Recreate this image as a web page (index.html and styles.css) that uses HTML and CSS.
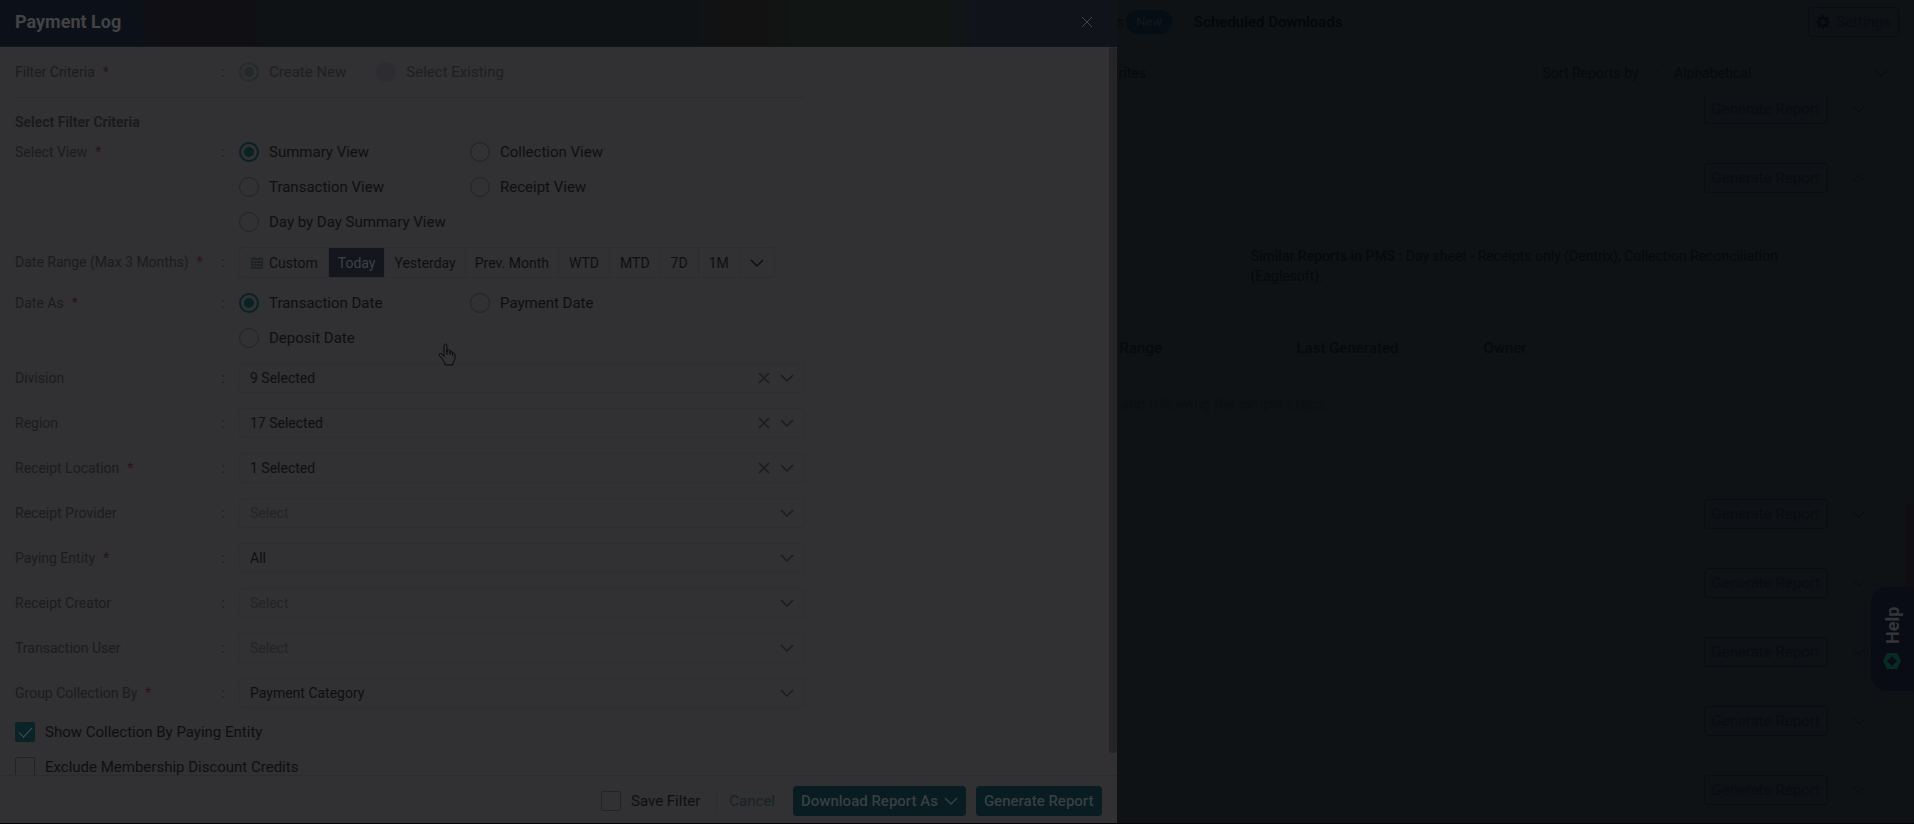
FILE: index.html
```html
<!DOCTYPE html>
<html lang="en">
<head>
  <meta charset="UTF-8" />
  <meta name="viewport" content="width=device-width, initial-scale=1.0" />
  <title>Payment Log</title>
  <link rel="stylesheet" href="styles.css">
</head>
<body>
  <svg class="sprite" aria-hidden="true">
    <symbol id="chevron" viewBox="0 0 14 14"><path d="M1 4l6 6 6-6" /></symbol>
    <symbol id="chevron-up" viewBox="0 0 14 14"><path d="M1 10l6-6 6 6" /></symbol>
    <symbol id="cross" viewBox="0 0 14 14"><path d="M2 2l10 10M12 2L2 12" /></symbol>
  </svg>

  <!-- Reports page behind the drawer -->
  <main class="reports">
    <nav class="tabs">
      <span>s</span>
      <span class="pill">New</span>
      <a class="tab" href="#scheduled">Scheduled Downloads</a>
      <button class="settings" type="button">
        <svg class="gear" viewBox="0 0 14 14"><path fill-rule="evenodd" d="M6 0h2l.4 1.8 1.4.6L11.500 1.400 12.800 2.800l-1 1.500.6 1.400L14 6v2l-1.700.4-.6 1.400 1 1.500-1.400 1.400-1.500-1-1.400.6L8 14H6l-.4-1.700-1.400-.6-1.500 1L1.300 11.300l1-1.500-.6-1.400L0 8V6l1.700-.4.6-1.400-1-1.500L2.700 1.300l1.500 1 1.400-.6zM7 4.500a2.500 2.500 0 100 5 2.500 2.500 0 000-5z" /></svg>
        Settings
      </button>
    </nav>

    <div class="toolbar">
      <span>rites</span>
      <label class="sort-label" for="sort">Sort Reports by</label>
      <span class="sort-colon">:</span>
      <div class="sort">
        <select id="sort"><option>Alphabetical</option></select>
        <svg class="icon"><use href="#chevron" /></svg>
      </div>
    </div>

    <section class="report first"><button class="ghost" type="button">Generate Report</button><svg class="icon"><use href="#chevron" /></svg></section>
    <section class="report"><button class="ghost" type="button">Generate Report</button><svg class="icon"><use href="#chevron-up" /></svg></section>

    <div class="details">
      <p class="similar"><b>Similar Reports in PMS :</b> Day sheet - Receipts only (Dentrix), Collection Reconciliation (Eaglesoft).</p>
      <div class="columns"><b>Range</b><b>Last Generated</b><b>Owner</b></div>
      <p class="hint">and following the simple steps.</p>
    </div>

    <section class="report"><button class="ghost" type="button">Generate Report</button><svg class="icon"><use href="#chevron" /></svg></section>
    <section class="report"><button class="ghost" type="button">Generate Report</button><svg class="icon"><use href="#chevron" /></svg></section>
    <section class="report"><button class="ghost" type="button">Generate Report</button><svg class="icon"><use href="#chevron" /></svg></section>
    <section class="report"><button class="ghost" type="button">Generate Report</button><svg class="icon"><use href="#chevron" /></svg></section>
    <section class="report"><button class="ghost" type="button">Generate Report</button><svg class="icon"><use href="#chevron" /></svg></section>
  </main>

  <div class="page-thumb"></div>
  <button class="help" type="button">
    <svg class="help-logo" viewBox="0 0 18 16"><path fill-rule="evenodd" d="M0 8L4 0h10l4 8-4 8H4zM9 3L4 8l5 5 5-5z" /></svg>
    Help
  </button>

  <!-- Drawer -->
  <form class="drawer">
    <header class="drawer-head">
      <h1>Payment Log</h1>
      <button class="close" type="button" aria-label="Close"><svg class="icon"><use href="#cross" /></svg></button>
    </header>

    <div class="drawer-body">
      <div class="content">
        <div class="row top-row">
          <span class="name">Filter Criteria <i>*</i></span>
          <div class="inline">
            <label class="choice"><input type="radio" name="criteria" checked disabled>Create New</label>
            <label class="choice"><input type="radio" name="criteria" disabled>Select Existing</label>
          </div>
        </div>

        <h2>Select Filter Criteria</h2>

        <div class="rows">
          <div class="row">
            <span class="name">Select View <i>*</i></span>
            <div class="options">
              <label class="choice"><input type="radio" name="view" checked>Summary View</label>
              <label class="choice"><input type="radio" name="view">Collection View</label>
              <label class="choice"><input type="radio" name="view">Transaction View</label>
              <label class="choice"><input type="radio" name="view">Receipt View</label>
              <label class="choice"><input type="radio" name="view">Day by Day Summary View</label>
            </div>
          </div>

          <div class="row">
            <span class="name range-name">Date Range (Max 3 Months) <i>*</i></span>
            <div class="range">
              <button type="button"><svg class="calendar" viewBox="0 0 12 12"><path fill-rule="evenodd" d="M2 0h2v1h4V0h2v1h2v11H0V1h2zM1 3v1h10V3zM2 6v1h2V6zM5 6v1h2V6zM8 6v1h2V6zM2 9v1h2V9zM5 9v1h2V9zM8 9v1h2V9z" /></svg>Custom</button>
              <button type="button" class="active">Today</button>
              <button type="button">Yesterday</button>
              <button type="button">Prev. Month</button>
              <button type="button">WTD</button>
              <button type="button">MTD</button>
              <button type="button">7D</button>
              <button type="button">1M</button>
              <button type="button" aria-label="More ranges"><svg class="icon"><use href="#chevron" /></svg></button>
            </div>
          </div>

          <div class="row">
            <span class="name">Date As <i>*</i></span>
            <div class="options">
              <label class="choice"><input type="radio" name="dateas" checked>Transaction Date</label>
              <label class="choice"><input type="radio" name="dateas">Payment Date</label>
              <label class="choice"><input type="radio" name="dateas">Deposit Date</label>
            </div>
          </div>

          <div class="row">
            <label class="name" for="division">Division</label>
            <div class="field">
              <select id="division"><option>9 Selected</option></select>
              <button class="clear" type="button" aria-label="Clear"><svg class="icon"><use href="#cross" /></svg></button>
              <svg class="icon"><use href="#chevron" /></svg>
            </div>
          </div>
          <div class="row">
            <label class="name" for="region">Region</label>
            <div class="field">
              <select id="region"><option>17 Selected</option></select>
              <button class="clear" type="button" aria-label="Clear"><svg class="icon"><use href="#cross" /></svg></button>
              <svg class="icon"><use href="#chevron" /></svg>
            </div>
          </div>
          <div class="row">
            <label class="name" for="location">Receipt Location <i>*</i></label>
            <div class="field">
              <select id="location"><option>1 Selected</option></select>
              <button class="clear" type="button" aria-label="Clear"><svg class="icon"><use href="#cross" /></svg></button>
              <svg class="icon"><use href="#chevron" /></svg>
            </div>
          </div>
          <div class="row">
            <label class="name" for="provider">Receipt Provider</label>
            <div class="field">
              <select id="provider" class="empty"><option>Select</option></select>
              <svg class="icon"><use href="#chevron" /></svg>
            </div>
          </div>
          <div class="row">
            <label class="name" for="entity">Paying Entity <i>*</i></label>
            <div class="field">
              <select id="entity"><option>All</option></select>
              <svg class="icon"><use href="#chevron" /></svg>
            </div>
          </div>
          <div class="row">
            <label class="name" for="creator">Receipt Creator</label>
            <div class="field">
              <select id="creator" class="empty"><option>Select</option></select>
              <svg class="icon"><use href="#chevron" /></svg>
            </div>
          </div>
          <div class="row">
            <label class="name" for="user">Transaction User</label>
            <div class="field">
              <select id="user" class="empty"><option>Select</option></select>
              <svg class="icon"><use href="#chevron" /></svg>
            </div>
          </div>
          <div class="row">
            <label class="name" for="group">Group Collection By <i>*</i></label>
            <div class="field">
              <select id="group"><option>Payment Category</option></select>
              <svg class="icon"><use href="#chevron" /></svg>
            </div>
          </div>
        </div>

        <div class="checks">
          <label class="choice"><input type="checkbox" checked>Show Collection By Paying Entity</label>
          <label class="choice"><input type="checkbox">Exclude Membership Discount Credits</label>
        </div>
      </div>
      <div class="thumb"></div>
    </div>

    <footer class="drawer-foot">
      <label class="choice"><input type="checkbox">Save Filter</label>
      <button class="cancel" type="button">Cancel</button>
      <button class="primary" type="button">Download Report As <svg class="icon"><use href="#chevron" /></svg></button>
      <button class="primary" type="button">Generate Report</button>
    </footer>
  </form>

  <svg class="pointer" viewBox="0 0 18 23"><path d="M6 14V3q0-2 1.500-2T9 3v6-1.500q1.500-1.500 3 0V10 8.500q1.500-1 2.500.5v2-1q2-.5 2.500 1.500V16l-2 4v2H7v-2l-3.500-5L1 12q0-2 2-1.500L6 13M9 8v4M12 9v3M14.500 10v3" /></svg>
</body>
</html>
```
FILE: styles.css
```css
* {
  box-sizing: border-box;
}
body {
  margin: 0;
  height: 100vh;
  overflow: hidden;
  background: #0e1214;
  border-bottom: 1px solid #060004;
  font-family: Roboto, sans-serif;
  font-size: 15px;
  line-height: 20px;
  color: #0f0f10;
}
button, select, input {
  margin: 0;
  padding: 0;
  border: 0;
  background: none;
  font: inherit;
  color: inherit;
}
.sprite {
  display: none;
}
.icon {
  flex: none;
  width: 14px;
  height: 14px;
  fill: none;
  stroke: currentColor;
  stroke-width: 1.5;
}

/* reports page */
.reports {
  height: 100%;
  padding-left: calc(100% * 7 / 12);
  overflow: hidden;
  color: #07090c;
}
.tabs {
  display: flex;
  align-items: center;
  height: 44px;
  padding-right: 15px;
}
.pill {
  margin: 0 22px 0 2px;
  padding: 2px 10px;
  border-radius: 12px;
  background: #050d15;
  color: #10171c;
  font-size: 13px;
  font-weight: 500;
}
.tab {
  color: #050608;
  text-decoration: none;
  font-weight: 500;
}
.settings {
  display: flex;
  align-items: center;
  gap: 6px;
  height: 30px;
  margin-left: auto;
  padding: 0 7px;
  border: 1px solid #090c12;
  border-radius: 4px;
  color: #090c12;
}
.gear {
  width: 14px;
  height: 14px;
  fill: #060a10;
}
.toolbar {
  display: flex;
  align-items: center;
  height: 50px;
  padding: 8px 26px 0 2px;
  font-size: 14px;
}
.sort-label {
  margin-left: auto;
}
.sort-colon {
  margin: 0 16px;
}
.sort {
  display: flex;
  align-items: center;
  width: 214px;
}
.sort select {
  flex: 1;
  appearance: none;
}
.report {
  display: flex;
  align-items: center;
  justify-content: flex-end;
  gap: 24px;
  height: 69px;
  padding-right: 48px;
}
.report .icon, .sort .icon {
  stroke-width: 1;
}
.ghost {
  height: 30px;
  padding: 0 7px;
  border: 1px solid #090c13;
  border-radius: 4px;
  color: #090c13;
}
.report.first {
  height: 30px;
  margin-bottom: 19px;
}
.report.first .ghost {
  border-top-color: transparent;
}
.details {
  height: 267px;
  padding-top: 34px;
}
.similar {
  width: 560px;
  margin: 0 0 52px 134px;
  font-size: 14px;
}
.similar b, .columns b {
  font-weight: 500;
}
.columns {
  display: grid;
  grid-template-columns: 177px 187px 1fr;
  padding-left: 3px;
}
.hint {
  margin: 36px 0 0 4px;
  color: #0d0d12;
}

.page-thumb {
  position: fixed;
  right: 0;
  top: 504px;
  width: 9px;
  height: 100px;
  border-radius: 4px 0 0 0;
  background: #100e13;
}
.help {
  position: fixed;
  right: 0;
  top: 587px;
  display: flex;
  align-items: center;
  gap: 9px;
  width: 43px;
  height: 104px;
  padding: 22px 0;
  border-radius: 0 16px 16px 0;
  background: #090c14;
  color: #343537;
  font-size: 18px;
  font-weight: 700;
  writing-mode: vertical-rl;
  transform: rotate(180deg);
}
.help-logo {
  flex: none;
  width: 18px;
  height: 16px;
  fill: #082c24;
}

/* drawer */
.drawer {
  position: fixed;
  top: 0;
  left: 0;
  bottom: 1px;
  width: calc(100% * 7 / 12);
  display: flex;
  flex-direction: column;
  background: #313032;
}
.drawer-head {
  flex: none;
  display: flex;
  align-items: center;
  justify-content: space-between;
  height: 47px;
  padding: 0 23px 2px 15px;
  background: linear-gradient(90deg, #0c1119 12%, #100f13 14%, #100f13 22%, #0e1214 24%, #0e1214 62%, #121213 64%, #121213 69%, #111513 71%, #111513 85%, #11131a 87%);
  border-bottom: 1px solid #12171a;
}
.drawer-head h1 {
  margin: 0;
  font-size: 18px;
  font-weight: 700;
  color: #434344;
}
.close {
  display: flex;
  color: #444544;
}
.close .icon {
  stroke-width: 1;
}
.drawer-body {
  position: relative;
  flex: 1;
  min-height: 0;
  overflow: hidden;
}
.content {
  max-width: 820px;
  padding: 10px 15px;
}
.thumb {
  position: absolute;
  top: 0;
  right: 0;
  bottom: 22px;
  width: 8px;
  border-radius: 4px;
  background: #242524;
}
.row {
  display: grid;
  grid-template-columns: 224px 1fr;
  align-items: start;
}
.name {
  display: flex;
  gap: 8px;
  padding-right: 14px;
  font-size: 14px;
  color: #1b1c1e;
}
.name::after {
  content: ":";
  margin-left: auto;
}
.name i {
  font-style: normal;
  color: #291517;
}
.range-name, label.name {
  line-height: 30px;
}
.top-row {
  align-items: center;
  height: 41px;
  padding-bottom: 10px;
  border-bottom: 1px solid #2b2c2e;
}
.inline {
  display: flex;
  gap: 30px;
}
h2 {
  margin: 14px 0 10px;
  font-size: 14px;
  line-height: 20px;
  font-weight: 600;
  color: #191a1c;
}
.rows {
  display: flex;
  flex-direction: column;
  gap: 15px;
}
.checks {
  display: grid;
  gap: 15px;
  margin-top: 14px;
}
.options {
  display: grid;
  grid-template-columns: 231px 1fr;
  row-gap: 15px;
}
.choice {
  display: flex;
  align-items: center;
  gap: 10px;
  white-space: nowrap;
}
.choice input {
  appearance: none;
  display: grid;
  place-content: center;
  width: 20px;
  height: 20px;
  border: 1px solid #222323;
  border-radius: 2px;
}
.choice input[type="radio"] {
  border-radius: 50%;
}
.choice input[type="radio"]:checked {
  border: 2px solid #0a2224;
}
.choice input[type="radio"]:checked::after {
  content: "";
  width: 10px;
  height: 10px;
  border-radius: 50%;
  background: #0a2224;
}
.choice input[type="checkbox"]:checked {
  border-color: #0a2326;
  background: #0a2326;
}
.choice input[type="checkbox"]:checked::after {
  content: "";
  width: 12px;
  height: 6px;
  margin-bottom: 4px;
  border: solid #465051;
  border-width: 0 0 1px 1px;
  transform: rotate(-47deg);
}
.choice:has(:disabled) {
  color: #1e1f20;
}
.choice input:disabled {
  border-color: #2d2c31;
  background: #2d2c31;
}
.choice input[type="radio"]:disabled:checked {
  border-color: #242c2c;
  background: none;
}
.choice input[type="radio"]:disabled:checked::after {
  background: #222a2a;
}
.range {
  display: flex;
  justify-self: start;
  height: 31px;
  border: 1px solid #2c2d2c;
  border-radius: 4px;
  font-size: 14px;
}
.range button {
  display: flex;
  align-items: center;
  gap: 6px;
  padding: 0 9px;
  border-right: 1px solid #2c2d2c;
}
.range button:first-child {
  padding: 0 10px 0 11px;
}
.range button:nth-child(n + 5) {
  padding: 0 10px;
}
.range button:last-child {
  border-right: 0;
}
.range .active {
  background: #13161d;
  color: #404143;
}
.calendar {
  width: 12px;
  height: 12px;
  fill: #1f2426;
}
.field {
  display: flex;
  align-items: center;
  height: 30px;
  padding: 0 10px;
  border: 1px solid #2d2e2d;
  border-radius: 4px;
  font-size: 14px;
}
.field select {
  flex: 1;
  height: 28px;
  appearance: none;
}
.field select.empty {
  color: #232425;
}
.field .icon {
  color: #1b1c1d;
}
.clear {
  display: flex;
  margin-right: 9px;
}
.drawer-foot {
  flex: none;
  display: flex;
  align-items: center;
  justify-content: flex-end;
  gap: 10px;
  height: 48px;
  padding: 3px 15px 0 0;
  border-top: 1px solid #2b2c2c;
}
.cancel {
  margin: 0 8px 0 6px;
  padding-left: 12px;
  border-left: 1px solid #2b2c2c;
  color: #132425;
}
.primary {
  display: flex;
  align-items: center;
  gap: 6px;
  height: 30px;
  padding: 0 8px;
  border-radius: 4px;
  background: #081c21;
  color: #384042;
  font-weight: 500;
}

.pointer {
  position: fixed;
  top: 343px;
  left: 438px;
  width: 18px;
  height: 23px;
  fill: #323133;
  stroke: #0a0a0a;
}
```
